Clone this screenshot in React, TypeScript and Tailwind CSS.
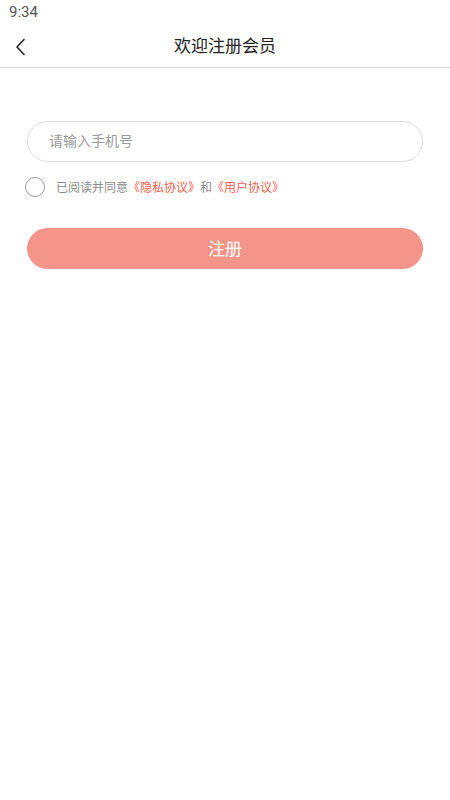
import { useState } from 'react';

const FONT = '"Noto Sans CJK SC", "Noto Sans", sans-serif';

export default function App() {
  const [phone, setPhone] = useState('');
  const [agreed, setAgreed] = useState(false);

  return (
    <div className="w-[450px] h-[800px] bg-white flex flex-col" style={{ fontFamily: FONT }}>
      <div className="h-[25px] flex items-center pl-[9px] text-[15px] text-[#555]" style={{ fontFamily: 'Roboto, sans-serif' }}>
        9:34
      </div>
      <header className="h-[43px] relative flex items-center justify-center border-b border-[#d6d6d6]">
        <button className="absolute left-[10px] top-[9px] p-1 text-[#222]">
          <svg width="14" height="18" viewBox="0 0 14 18" fill="none">
            <path d="M10 1.5 L3 9 L10 16.5" stroke="currentColor" strokeWidth="1.6" strokeLinecap="round" strokeLinejoin="round" />
          </svg>
        </button>
        <h1 className="text-[17px] text-[#222] font-normal -mt-[2px]">欢迎注册会员</h1>
      </header>

      <div className="px-[27px] pt-[53px] flex flex-col">
        <input
          value={phone}
          onChange={e => setPhone(e.target.value)}
          placeholder="请输入手机号"
          className="h-[41px] w-full rounded-full border border-[#dcdcdc] px-[21px] pb-[3px] text-[14px] text-[#333] placeholder:text-[#9a9a9a] outline-none"
        />
        <div className="flex items-center mt-[15px] -ml-[2px] text-[12px]">
          <button
            onClick={() => setAgreed(!agreed)}
            className="w-[20px] h-[20px] rounded-full border border-[#9a9a9a] mr-[11px]"
          />
          <span className="text-[#8a8a8a]">已阅读并同意</span>
          <span className="text-[#f0604f]">《隐私协议》</span>
          <span className="text-[#8a8a8a]">和</span>
          <span className="text-[#f0604f]">《用户协议》</span>
        </div>
        <button className="mt-[31px] pb-[2px] h-[41px] w-full rounded-full bg-[#f5958a] text-white text-[17px]">注册</button>
      </div>
    </div>
  );
}
